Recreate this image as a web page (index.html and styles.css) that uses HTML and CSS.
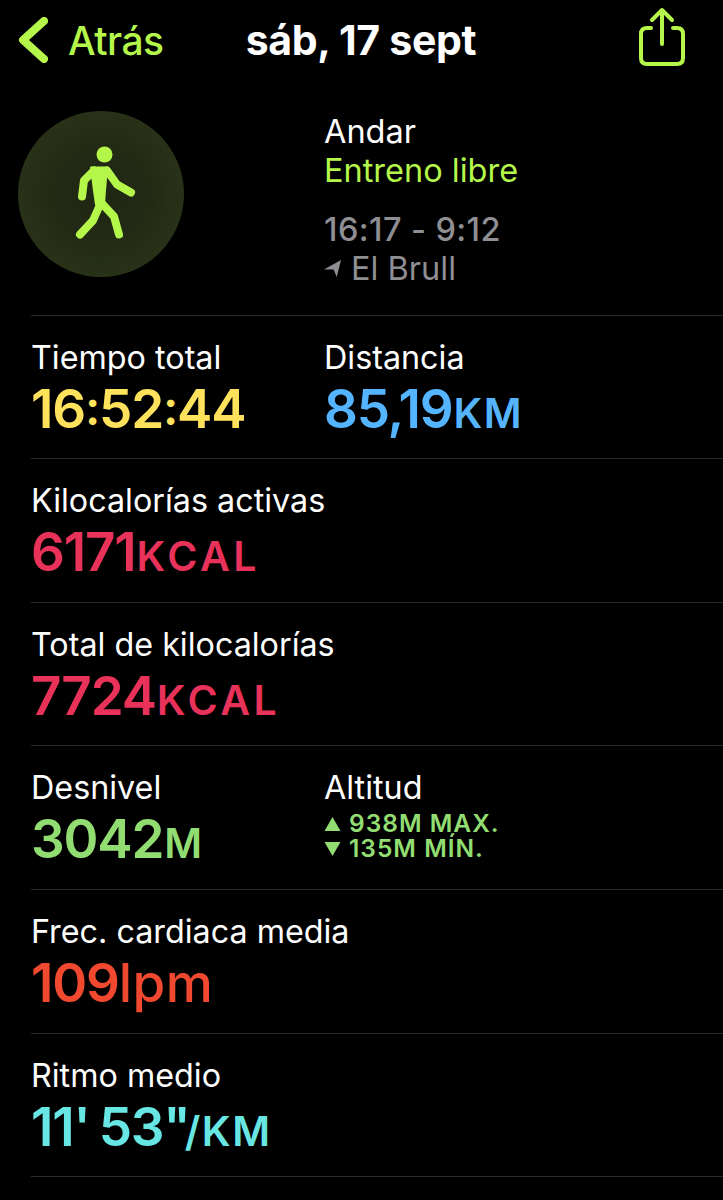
FILE: index.html
```html
<!DOCTYPE html>
<html lang="es">
<head>
  <meta charset="UTF-8" />
  <title>Resumen del entreno</title>
  <link rel="stylesheet" href="styles.css">
</head>
<body>
  <div class="screen">
    <div class="nav">
      <a class="back">
        <svg class="chevron" viewBox="0 0 30 46"><path d="M26 4 L5 23 L26 42" /></svg>
        <span>Atrás</span>
      </a>
      <div class="nav-title">sáb, 17 sept</div>
      <svg class="share" viewBox="0 0 48 60">
        <path d="M13 21 H9 Q3 21 3 27 V51 Q3 57 9 57 H39 Q45 57 45 51 V27 Q45 21 39 21 H35" />
        <path d="M24 37 V3 M14 13 L24 3 L34 13" />
      </svg>
    </div>

    <div class="summary">
      <div class="badge">
        <svg class="walker" viewBox="-4 3.5 90 120">
          <circle class="head" cx="44.5" cy="24" r="8" />
          <path class="limb" d="M34 40 L24 50 L22 66" />
          <path class="limb" d="M47 40 L57 54 L71 62" />
          <path class="torso" d="M31 37 H47 L45 60 L44 74 H36 L34 60 Z" />
          <path class="limb" d="M41 72 L33 90 L20 104" />
          <path class="limb" d="M41 72 L54 86 L59 104" />
        </svg>
      </div>
      <div class="summary-text">
        <div class="sum-title">Andar</div>
        <div class="sum-sub">Entreno libre</div>
        <div class="sum-time">16:17 - 9:12</div>
        <div class="sum-place">
          <svg class="arrow" viewBox="0 0 16 16"><path d="M16 0 L12 16 L9 9 L0 9 Z" /></svg>
          El Brull
        </div>
      </div>
    </div>

    <div class="row two">
      <div>
        <div class="label">Tiempo total</div>
        <div class="value yellow">16<span class="colon">:</span>52<span class="colon">:</span>44</div>
      </div>
      <div>
        <div class="label">Distancia</div>
        <div class="value blue">85,19<span class="unit">KM</span></div>
      </div>
    </div>

    <div class="row">
      <div class="label">Kilocalorías activas</div>
      <div class="value pink">6171<span class="unit wide">KCAL</span></div>
    </div>

    <div class="row">
      <div class="label">Total de kilocalorías</div>
      <div class="value pink">7724<span class="unit wide">KCAL</span></div>
    </div>

    <div class="row two">
      <div>
        <div class="label">Desnivel</div>
        <div class="value green">3042<span class="unit">M</span></div>
      </div>
      <div>
        <div class="label">Altitud</div>
        <div class="altitude green">
          <div class="alt-line"><svg class="tri" viewBox="0 0 16 16"><path d="M8 1 L16 15 H0 Z" /></svg>938M MAX.</div>
          <div class="alt-line"><svg class="tri" viewBox="0 0 16 16"><path d="M0 1 H16 L8 15 Z" /></svg>135M MÍN.</div>
        </div>
      </div>
    </div>

    <div class="row">
      <div class="label">Frec. cardiaca media</div>
      <div class="value red">109<span class="lpm">lpm</span></div>
    </div>

    <div class="row">
      <div class="label">Ritmo medio</div>
      <div class="value cyan pace">11' 53<span class="quotes">''</span><span class="unit">/KM</span></div>
    </div>

    <div class="row last">
      <div class="label">Calorías</div>
    </div>
  </div>
</body>
</html>
```

FILE: styles.css
```css
html, body {
  margin: 0;
  background: #000;
}
.screen {
  width: 723px;
  height: 1200px;
  overflow: hidden;
  background: #000;
  color: #fff;
  font-family: Inter, "Liberation Sans", sans-serif;
}
.nav {
  display: flex;
  align-items: center;
  height: 80px;
  padding: 0 37px 0 18px;
}
.back {
  display: flex;
  align-items: center;
  gap: 20px;
  color: #b4f64a;
  font-size: 39px;
  font-weight: 500;
  letter-spacing: -0.5px;
}
.chevron {
  width: 30px;
  height: 46px;
  fill: none;
  stroke: #b4f64a;
  stroke-width: 8;
  stroke-linecap: round;
  stroke-linejoin: round;
}
.nav-title {
  margin-left: 82px;
  font-size: 41px;
  font-weight: 700;
  letter-spacing: -0.3px;
}
.share {
  width: 48px;
  height: 60px;
  margin-top: -6px;
  margin-left: auto;
  fill: none;
  stroke: #b4f64a;
  stroke-width: 4;
  stroke-linecap: round;
  stroke-linejoin: round;
}
.summary {
  display: flex;
  height: 234.6px;
  padding-left: 18px;
}
.badge {
  display: flex;
  align-items: center;
  justify-content: center;
  flex: none;
  width: 166px;
  height: 166px;
  margin-top: 31px;
  border-radius: 50%;
  background: radial-gradient(circle, #1f2513 0%, #232b15 45%, #2f3a1b 100%);
}
.walker {
  width: 90px;
  height: 120px;
}
.head {
  fill: #b4f64a;
}
.torso {
  fill: #b4f64a;
  stroke: #b4f64a;
  stroke-width: 2;
  stroke-linejoin: round;
}
.limb {
  fill: none;
  stroke: #b4f64a;
  stroke-width: 8;
  stroke-linecap: round;
  stroke-linejoin: round;
}
.summary-text {
  margin-left: 140px;
  padding-top: 32px;
  font-size: 32.5px;
  line-height: 39px;
}
.sum-sub {
  color: #b4f64a;
}
.sum-time {
  margin-top: 20px;
  color: #8e8e93;
  font-weight: 500;
  letter-spacing: 0.4px;
}
.sum-place {
  display: flex;
  align-items: center;
  gap: 10px;
  color: #8e8e93;
}
.arrow {
  width: 17px;
  height: 17px;
  fill: #8e8e93;
}
.row {
  height: 143.6px;
  box-sizing: border-box;
  margin-left: 31px;
  padding: 24px 0 0;
  border-top: 1px solid #2a2a2c;
}
.row.last {
  padding-top: 20px;
}
.two {
  display: grid;
  grid-template-columns: 293px 1fr;
}
.label {
  font-size: 32.3px;
  line-height: 36px;
}
.value {
  margin-top: 3px;
  font-size: 53px;
  font-weight: 600;
  line-height: 60px;
  letter-spacing: -1.2px;
}
.colon {
  font-size: 48px;
  vertical-align: 3px;
  line-height: 1;
}
.pace {
  word-spacing: -3px;
}
.quotes {
  letter-spacing: -7px;
}
.unit {
  margin-left: 1px;
  font-size: 41px;
  font-weight: 600;
  letter-spacing: 1.5px;
}
.unit.wide {
  letter-spacing: 3.5px;
}
.lpm {
  font-weight: 500;
  letter-spacing: 0.5px;
}
.altitude {
  margin-top: 5px;
  font-size: 24.5px;
  font-weight: 600;
  line-height: 25px;
  letter-spacing: 1px;
}
.alt-line {
  display: flex;
  align-items: center;
  gap: 8px;
}
.tri {
  width: 17px;
  height: 16px;
  fill: currentColor;
}
.yellow { color: #ffe25c; }
.blue { color: #55b4ff; }
.pink { color: #e8325a; }
.green { color: #92dd72; }
.red { color: #f0492f; }
.cyan { color: #68e6e4; }
```
